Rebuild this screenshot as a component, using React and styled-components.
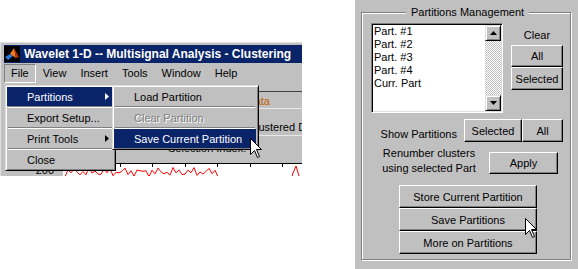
import React from "react";
import styled, { createGlobalStyle } from "styled-components";

const GlobalStyle = createGlobalStyle`
  html, body { margin: 0; padding: 0; background: #fff; }
  body {
    font-family: "Liberation Sans", Arial, sans-serif;
    font-size: 11px;
    color: #000;
  }
`;

const Page = styled.div`
  position: relative;
  display: flex;
  width: 578px;
  height: 269px;
  overflow: hidden;
`;

/* ---------- left: the figure window with the open File menu ---------- */

const Window = styled.div`
  margin-top: 42px;
  width: 302px;
  height: 134px;
  padding: 3px 0 0 4px;
  box-sizing: border-box;
  background: #c0c0c0;
  box-shadow: inset 1px 1px 0 #dfdfdf;
  display: flex;
  flex-direction: column;
  overflow: hidden;
`;

const TitleBar = styled.div`
  height: 18px;
  flex: none;
  background: #0a246a;
  display: flex;
  align-items: center;
  gap: 4px;
  color: #fff;
  font: bold 12px "Liberation Sans", Arial, sans-serif;
  white-space: nowrap;
`;

const MenuBar = styled.div`
  height: 21px;
  flex: none;
  display: flex;
  align-items: center;
`;

const MenuTitle = styled.div`
  height: 17px;
  line-height: 16px;
  padding: 0 6px;
  border: 1px solid transparent;
  border-color: ${(p) => (p.$open ? "#808080 #fff #fff #808080" : "transparent")};
  margin-left: ${(p) => (p.$open ? "0" : "0")};
`;

const Content = styled.div`
  position: relative;
  flex: 1;
  display: flex;
  flex-direction: column;
`;

const DataPanel = styled.div`
  margin: 7px 0 0 106px;
  border-top: 1px solid #404040;
  display: flex;
  flex-direction: column;
`;

const DataRow = styled.div`
  height: ${(p) => p.$h}px;
  box-sizing: border-box;
  padding: ${(p) => p.$pad};
  line-height: 14px;
  color: ${(p) => p.$color || "#000"};
  text-align: ${(p) => p.$align || "left"};
  border-bottom: ${(p) => (p.$line ? "1px solid #e8e8e8" : "none")};
  white-space: nowrap;
`;

const PlotRow = styled.div`
  flex: 1;
  display: flex;
  align-items: flex-end;
`;

const YLabel = styled.div`
  width: 59px;
  height: 13px;
  box-sizing: border-box;
  padding-right: 4px;
  text-align: right;
  line-height: 14px;
  display: flex;
  justify-content: flex-end;
  align-items: center;
  gap: 2px;
`;

const Tick = styled.span`
  width: 3px;
  height: 1px;
  background: #000;
`;

const Plot = styled.div`
  flex: 1;
  height: 13px;
  background: #fff;
  border-top: 1px solid #000;
  box-sizing: border-box;
  overflow: hidden;
`;

const Menu = styled.div`
  position: absolute;
  left: ${(p) => p.$left}px;
  top: 1px;
  width: ${(p) => p.$w}px;
  box-sizing: border-box;
  padding: 1px 2px 1px 1px;
  background: #c0c0c0;
  border: 1px solid;
  border-color: #dfdfdf #000 #000 #dfdfdf;
  box-shadow: inset 1px 1px 0 #fff, inset -1px -1px 0 #808080;
  display: flex;
  flex-direction: column;
  z-index: ${(p) => p.$z || 1};
`;

const Item = styled.div`
  height: 19px;
  display: flex;
  align-items: center;
  justify-content: space-between;
  padding: 0 4px 0 ${(p) => p.$indent}px;
  background: ${(p) => (p.$active ? "#0a246a" : "transparent")};
  color: ${(p) => (p.$active ? "#fff" : p.$disabled ? "#808080" : "#000")};
  text-shadow: ${(p) => (p.$disabled ? "1px 1px 0 #fff" : "none")};
  white-space: nowrap;
`;

const Sep = styled.div`
  height: 0;
  margin: 0 1px;
  border-top: 1px solid #808080;
  border-bottom: 1px solid #fff;
`;

const Arrow = ({ color }) => (
  <svg width="4" height="7" viewBox="0 0 4 7">
    <polygon points="0,0 4,3.5 0,7" fill={color} />
  </svg>
);

const Logo = () => (
  <svg width="16" height="16" viewBox="0 0 16 16">
    <rect width="16" height="16" fill="#000" />
    <polygon points="1,11 6,8 9,10 4,14" fill="#2b74d9" />
    <polygon points="6,8 10,2 12,12 9,10" fill="#f0801c" />
    <polygon points="10,2 15,11 12,12" fill="#b8300c" />
  </svg>
);

const CursorBox = styled.div`
  position: absolute;
  left: ${(p) => p.$x}px;
  top: ${(p) => p.$y}px;
  width: 12px;
  height: 20px;
  z-index: 5;
`;

const Cursor = ({ x, y }) => (
  <CursorBox $x={x} $y={y}>
    <svg width="12" height="20" viewBox="0 0 12 20">
      <polygon
        points="0.5,0.5 0.5,16.5 4.5,12.5 7.5,19.5 9.5,18.5 6.5,11.5 11.5,11.5"
        fill="#fff"
        stroke="#000"
        strokeWidth="1"
        strokeLinejoin="miter"
      />
    </svg>
  </CursorBox>
);

const signal = (() => {
  const pts = [];
  for (let x = 2; x <= 156; x += 3) {
    const y = 8 + 3 * Math.sin(x * 0.9) + 2 * Math.sin(x * 0.37 + 1);
    pts.push(`${x},${y.toFixed(1)}`);
  }
  pts.push("160,16", "228,16", "230,9", "233,2", "236,12", "239,16");
  return pts.join(" ");
})();

const PlotSvg = () => (
  <svg width="239" height="12" viewBox="0 0 239 12">
    <polyline points={signal} fill="none" stroke="#f00" strokeWidth="1" />
    {[57, 89, 122, 154, 187, 219].map((x) => (
      <line key={x} x1={x + 0.5} y1="0" x2={x + 0.5} y2="3" stroke="#000" />
    ))}
  </svg>
);

/* ---------- right: Partitions Management panel ---------- */

const Panel = styled.div`
  margin-left: auto;
  width: 223px;
  height: 269px;
  box-sizing: border-box;
  padding: 12px 7px 9px 6px;
  background: #c0c0c0;
`;

const Frame = styled.div`
  position: relative;
  height: 248px;
  box-sizing: border-box;
  border: 1px solid #808080;
  box-shadow: inset 1px 1px 0 #fff, 1px 1px 0 #fff;
  padding: 10px 0 0 9px;
  display: flex;
  flex-direction: column;
`;

const FrameTitle = styled.span`
  position: absolute;
  top: -8px;
  left: 44px;
  padding: 0 5px;
  line-height: 14px;
  background: #c0c0c0;
  white-space: nowrap;
`;

const TopRow = styled.div`
  display: flex;
  gap: 8px;
`;

const ListBox = styled.div`
  width: 132px;
  height: 90px;
  box-sizing: border-box;
  background: #fff;
  border: 1px solid;
  border-color: #808080 #fff #fff #808080;
  box-shadow: inset 1px 1px 0 #000, inset -1px -1px 0 #dfdfdf;
  padding: 1px 1px 1px 1px;
  display: flex;
`;

const ListItems = styled.div`
  flex: 1;
  padding: 0 0 0 1px;
`;

const ListItem = styled.div`
  line-height: 13px;
  height: 13px;
  white-space: nowrap;
`;

const ScrollBar = styled.div`
  width: 16px;
  display: flex;
  flex-direction: column;
`;

const ScrollBtn = styled.div`
  height: 16px;
  box-sizing: border-box;
  background: #c0c0c0;
  border: 1px solid;
  border-color: #dfdfdf #000 #000 #dfdfdf;
  box-shadow: inset 1px 1px 0 #fff, inset -1px -1px 0 #808080;
  display: flex;
  align-items: center;
  justify-content: center;
`;

const Track = styled.div`
  flex: 1;
  background: repeating-conic-gradient(#fff 0 25%, #c0c0c0 0 50%) 0 0 / 2px 2px;
`;

const SideCol = styled.div`
  width: 52px;
  display: flex;
  flex-direction: column;
`;

const Caption = styled.div`
  height: 22px;
  display: flex;
  align-items: center;
  justify-content: center;
  padding-top: 1px;
  box-sizing: border-box;
`;

const Button = styled.button`
  width: ${(p) => p.$w}px;
  height: ${(p) => p.$h || 23}px;
  flex: none;
  padding: 0;
  margin: 0;
  background: #c0c0c0;
  border: 1px solid;
  border-color: #fff #000 #000 #fff;
  box-shadow: inset -1px -1px 0 #808080;
  font: 11px "Liberation Sans", Arial, sans-serif;
  color: #000;
  white-space: nowrap;
`;

const ShowRow = styled.div`
  margin-top: 6px;
  padding-right: 7px;
  display: flex;
  justify-content: flex-end;
  align-items: flex-end;
`;

const Label = styled.div`
  line-height: 16px;
  margin-right: 7px;
  white-space: nowrap;
`;

const RenumberRow = styled.div`
  margin-top: 4px;
  display: flex;
  align-items: flex-start;
`;

const RenumberText = styled.div`
  margin-left: 5px;
  width: 106px;
  text-align: center;
  line-height: 15px;
`;

const ApplyWrap = styled.div`
  margin: 6px 0 0 7px;
`;

const Stack = styled.div`
  margin: 9px 0 0 28px;
  width: 138px;
  display: flex;
  flex-direction: column;
`;

const Tri = ({ up }) => (
  <svg width="7" height="4" viewBox="0 0 7 4">
    <polygon points={up ? "3.5,0 7,4 0,4" : "0,0 7,0 3.5,4"} fill="#000" />
  </svg>
);

const parts = ["Part. #1", "Part. #2", "Part. #3", "Part. #4", "Curr. Part"];
const menus = ["File", "View", "Insert", "Tools", "Window", "Help"];

export default function App() {
  return (
    <Page>
      <GlobalStyle />
      <Window>
        <TitleBar>
          <Logo />
          Wavelet 1-D -- Multisignal Analysis - Clustering
        </TitleBar>
        <MenuBar>
          {menus.map((m) => (
            <MenuTitle key={m} $open={m === "File"}>
              {m}
            </MenuTitle>
          ))}
        </MenuBar>
        <Content>
          <DataPanel>
            <DataRow $h={17} $pad="2px 32px 0 0" $align="right" $color="#c06000" $line>
              Original Data
            </DataRow>
            <DataRow $h={27} $pad="11px 0 0 138px" $line>
              Clustered Data
            </DataRow>
            <DataRow $h={20} $pad="5px 0 0 58px">
              Selection Index:
            </DataRow>
          </DataPanel>
          <PlotRow>
            <YLabel>
              200
              <Tick />
            </YLabel>
            <Plot>
              <PlotSvg />
            </Plot>
          </PlotRow>

          <Menu $left={1} $w={111}>
            <Item $indent={20} $active>
              Partitions <Arrow color="#fff" />
            </Item>
            <Sep />
            <Item $indent={20}>Export Setup...</Item>
            <Sep />
            <Item $indent={20}>
              Print Tools <Arrow color="#000" />
            </Item>
            <Sep />
            <Item $indent={20}>Close</Item>
          </Menu>

          <Menu $left={108} $w={147} $z={2}>
            <Item $indent={20}>Load Partition</Item>
            <Sep />
            <Item $indent={20} $disabled>
              Clear Partition
            </Item>
            <Sep />
            <Item $indent={20} $active>
              Save Current Partition
            </Item>
          </Menu>
        </Content>
      </Window>

      <Panel>
        <Frame>
          <FrameTitle>Partitions Management</FrameTitle>
          <TopRow>
            <ListBox>
              <ListItems>
                {parts.map((p) => (
                  <ListItem key={p}>{p}</ListItem>
                ))}
              </ListItems>
              <ScrollBar>
                <ScrollBtn>
                  <Tri up />
                </ScrollBtn>
                <Track />
                <ScrollBtn>
                  <Tri />
                </ScrollBtn>
              </ScrollBar>
            </ListBox>
            <SideCol>
              <Caption>Clear</Caption>
              <Button $w={52} $h={22}>All</Button>
              <Button $w={52} $h={23}>Selected</Button>
            </SideCol>
          </TopRow>
          <ShowRow>
            <Label>Show Partitions</Label>
            <Button $w={58}>Selected</Button>
            <Button $w={41}>All</Button>
          </ShowRow>
          <RenumberRow>
            <RenumberText>
              Renumber clusters
              <br />
              using selected Part
            </RenumberText>
            <ApplyWrap>
              <Button $w={69} $h={22}>Apply</Button>
            </ApplyWrap>
          </RenumberRow>
          <Stack>
            <Button $w={138}>Store Current Partition</Button>
            <Button $w={138}>Save Partitions</Button>
            <Button $w={138}>More on Partitions</Button>
          </Stack>
        </Frame>
      </Panel>

      <Cursor x={250} y={138} />
      <Cursor x={525} y={218} />
    </Page>
  );
}
